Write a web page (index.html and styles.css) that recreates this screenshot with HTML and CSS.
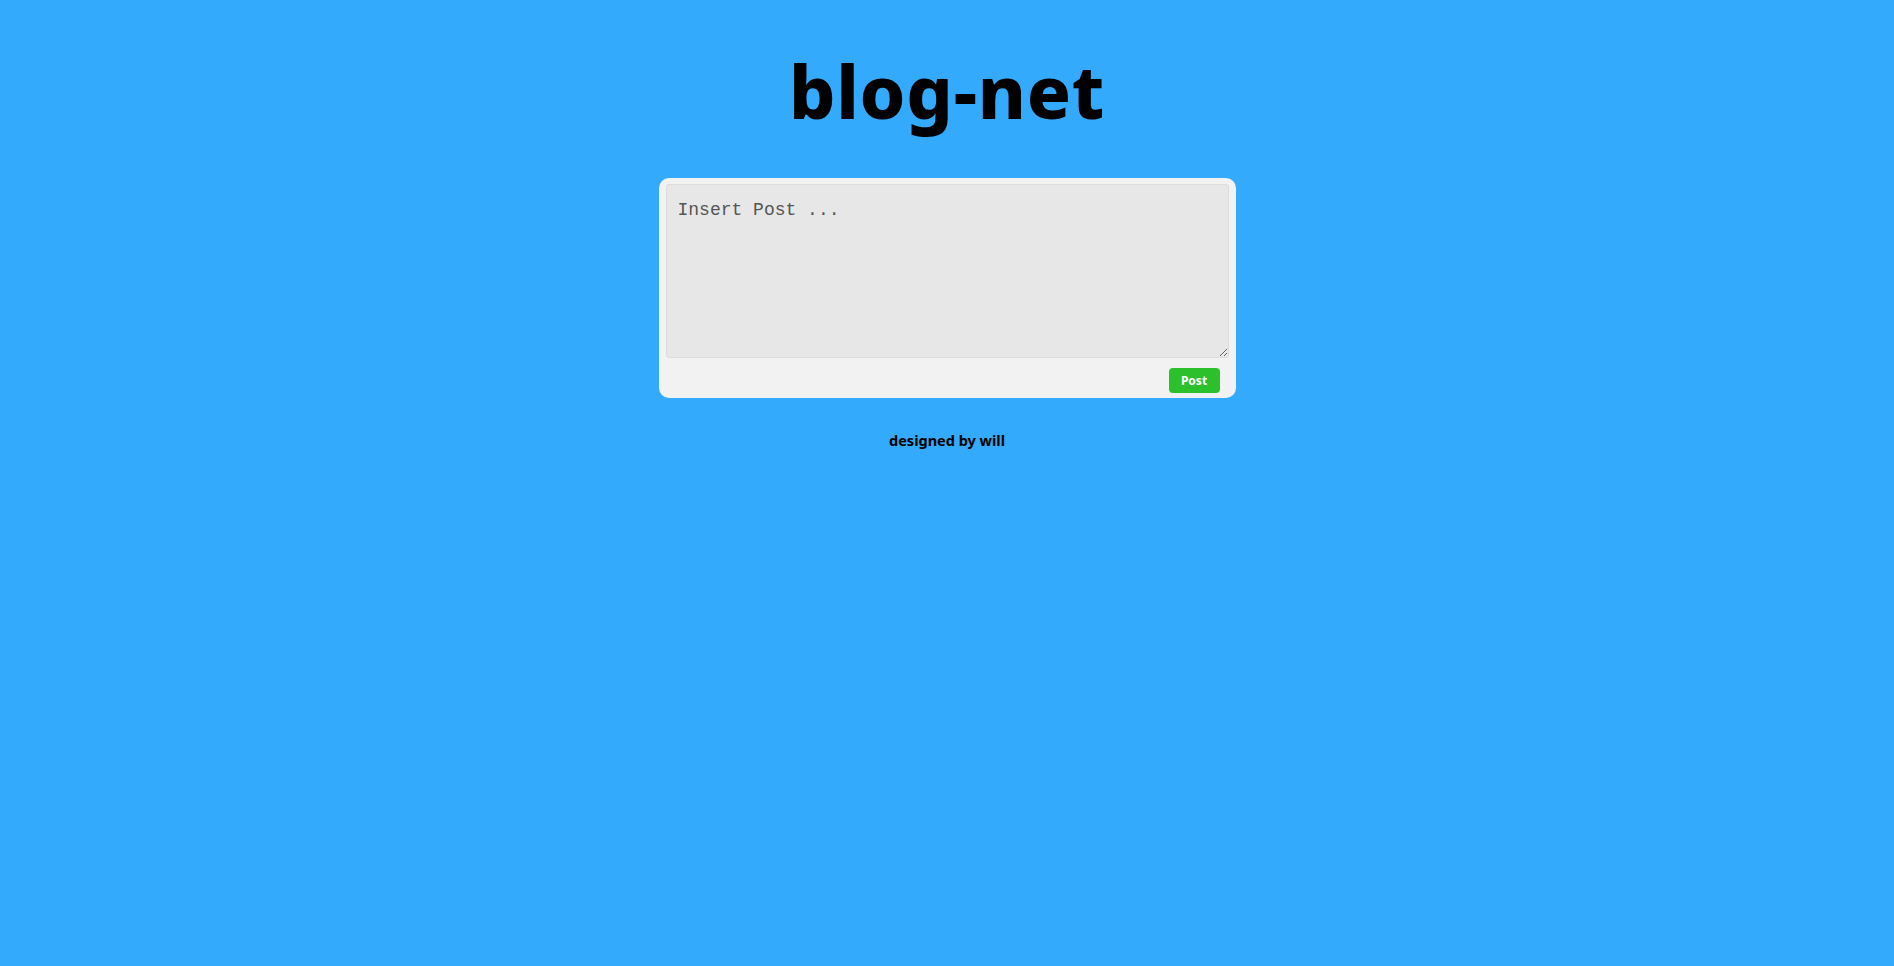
FILE: index.html
```html
<!DOCTYPE html>
<html lang="en">
<head>
<meta charset="utf-8">
<title>blog-net</title>
<link rel="stylesheet" href="styles.css">
</head>
<body>
<main class="page">
  <h1 class="title">blog-net</h1>
  <form class="post-card">
    <textarea class="post-input" placeholder="Insert Post ..."></textarea>
    <div class="post-actions">
      <button type="button" class="post-btn">Post</button>
    </div>
  </form>
  <footer class="credit">designed by will</footer>
</main>
</body>
</html>
```

FILE: styles.css
```css
html, body {
  margin: 0;
  padding: 0;
  height: 100%;
}
body {
  background: #33aafc;
  font-family: "Noto Sans", sans-serif;
  color: #000;
}
.page {
  display: flex;
  flex-direction: column;
  align-items: center;
}
.title {
  margin: 43px 0 0;
  font-family: "Noto Sans", sans-serif;
  font-weight: 800;
  font-size: 73px;
  line-height: 96px;
  letter-spacing: 0.8px;
}
.post-card {
  margin-top: 39px;
  width: 577px;
  box-sizing: border-box;
  background: #f2f2f2;
  border-radius: 10px;
  padding: 6px 7px 5px 7px;
  display: flex;
  flex-direction: column;
}
.post-input {
  display: block;
  box-sizing: border-box;
  width: 100%;
  height: 174px;
  margin: 0;
  padding: 15px 11px;
  border: 1px solid #dcdcdc;
  border-radius: 3px;
  background: #e7e7e7;
  font-family: "Liberation Mono", monospace;
  font-size: 18px;
  color: #333;
  resize: vertical;
  outline: none;
}
.post-input::placeholder {
  color: #555;
  opacity: 1;
}
.post-actions {
  display: flex;
  justify-content: flex-end;
  padding: 10px 9px 0 0;
}
.post-btn {
  width: 51px;
  height: 25px;
  border: none;
  border-radius: 4px;
  background: #2cc12c;
  color: #fff;
  font-family: "Noto Sans", sans-serif;
  font-weight: 700;
  font-size: 12px;
  padding: 0;
  cursor: pointer;
}
.credit {
  margin-top: 32px;
  font-family: "Noto Sans", sans-serif;
  font-weight: 700;
  font-size: 14.5px;
}
```
